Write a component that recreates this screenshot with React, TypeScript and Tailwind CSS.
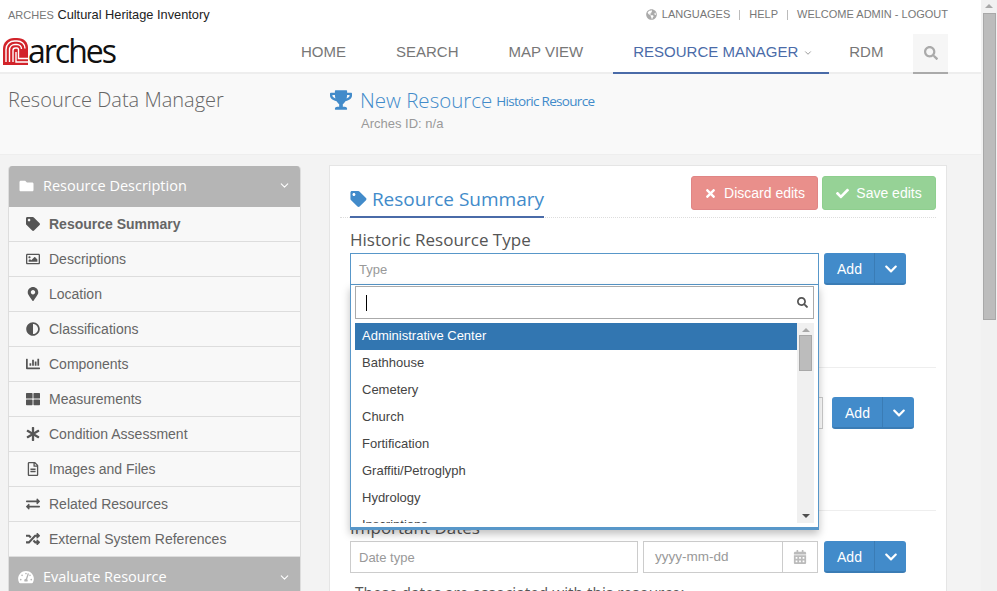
import { ChevronDown } from 'lucide-react'
import { FaAdjust, FaCalendarAlt, FaChartBar, FaCheck, FaChevronDown, FaExchangeAlt, FaFolder, FaGlobeAmericas, FaRegImage, FaMapMarkerAlt, FaAsterisk, FaRandom, FaRegFileAlt, FaSearch, FaTachometerAlt, FaTag, FaThLarge, FaTimes, FaTrophy } from 'react-icons/fa'

const sideItems = [
  { label: 'Resource Summary', icon: FaTag, active: true },
  { label: 'Descriptions', icon: FaRegImage },
  { label: 'Location', icon: FaMapMarkerAlt },
  { label: 'Classifications', icon: FaAdjust },
  { label: 'Components', icon: FaChartBar },
  { label: 'Measurements', icon: FaThLarge },
  { label: 'Condition Assessment', icon: FaAsterisk },
  { label: 'Images and Files', icon: FaRegFileAlt },
  { label: 'Related Resources', icon: FaExchangeAlt },
  { label: 'External System References', icon: FaRandom },
]

const options = ['Bathhouse', 'Cemetery', 'Church', 'Fortification', 'Graffiti/Petroglyph', 'Hydrology', 'Inscriptions']

const AddButton = () => (
  <div className="flex h-[32px] w-[82px] shrink-0 rounded-[3px] border-b-2 border-[#3a7cb5] bg-[#428bca] text-white">
    <div className="flex w-[51px] items-center justify-center border-r border-[#3a7cb5] pl-[1px] pt-[2px] text-[14px]">Add</div>
    <div className="flex flex-1 items-center justify-center pt-[1px]">
      <FaChevronDown className="h-[14px] w-[14px]" />
    </div>
  </div>
)

const Logo = () => (
  <div className="flex items-end">
    <svg width="26" height="27" viewBox="0 0 26 27" fill="none" className="shrink-0">
      <path d="M0 27V11C0 4 5 0 11 0H14C21 0 25 4 25 10V27Z" fill="#d2232a" />
      <path d="M3 24V11.5C3 6 7 3 11.5 3H14C18.5 3 22 6 22 10.5" stroke="#fff" strokeWidth="1.4" />
      <path d="M6.5 24V12C6.5 8.5 9 6.5 12 6.5H14C16.5 6.5 18.5 8.5 18.5 11" stroke="#fff" strokeWidth="1.4" />
      <path d="M10 24V12.5C10 11 11 10 12.5 10H14C15 10 15.5 10.5 15.5 12V20.5H26" stroke="#fff" strokeWidth="1.4" />
      <path d="M13 14V24H26" stroke="#fff" strokeWidth="1.4" />
    </svg>
    <span className="-ml-[1px] -mb-[1px] font-['Open_Sans',sans-serif] text-[32px] leading-[30px] tracking-[-2px] text-[#111]">arches</span>
  </div>
)

export default function App() {
  return (
    <div className="flex h-[591px] w-[997px] overflow-hidden bg-[#f3f3f3] font-['Liberation_Sans',sans-serif]">
      <div className="h-full w-[981px] shrink-0">
        <header className="h-[74px] border-b-2 border-[#eeeeee] bg-white">
          <div className="flex h-[28px] items-center justify-between pl-2 pr-[33px] pt-[1px]">
            <div className="text-[12.8px] text-[#222]">
              <span className="text-[11px] text-[#777]">ARCHES</span> Cultural Heritage Inventory
            </div>
            <div className="flex items-center text-[11px] text-[#777]">
              <FaGlobeAmericas className="mr-[5px] h-[11px] w-[11px] text-[#aaa]" />
              LANGUAGES
              <span className="mx-[9px] h-[10px] w-px bg-[#bbb]" />
              HELP
              <span className="mx-[9px] h-[10px] w-px bg-[#bbb]" />
              WELCOME ADMIN - LOGOUT
            </div>
          </div>
          <div className="flex h-[46px] items-start">
            <div className="ml-[3px] mt-[8px] w-[278px] shrink-0"><Logo /></div>
            <nav className="flex h-[46px] shrink-0 items-start whitespace-nowrap text-[15px] text-[#777]">
              <div className="flex h-[46px] items-center px-5 pt-[3px]">HOME</div>
              <div className="ml-[10px] flex h-[46px] items-center px-5 pt-[3px]">SEARCH</div>
              <div className="ml-[10px] flex h-[46px] items-center px-5 pt-[3px]">MAP VIEW</div>
              <div className="ml-[10px] flex h-[46px] w-[216px] items-center border-b-2 border-[#4a6ba8] pl-5 pt-[5px] text-[#4a6ba8]">
                RESOURCE MANAGER
                <ChevronDown className="ml-[5px] h-[10px] w-[10px] text-[#888]" />
              </div>
              <div className="flex h-[46px] items-center px-5 pt-[3px]">RDM</div>
              <div className="ml-[10px] mt-[6px] flex h-[40px] w-[35px] items-center justify-center border-b-2 border-[#aaaaaa] bg-[#f6f6f6]">
                <FaSearch className="h-[14px] w-[14px] text-[#aaa]" />
              </div>
            </nav>
          </div>
        </header>

        <div className="flex h-[81px] border-b border-[#eeeeee] bg-[#f9f9f9]">
          <div className="w-[330px] pl-2 pt-[10px] font-['Open_Sans',sans-serif] text-[20px] font-light leading-[32px] text-[#666]">Resource Data Manager</div>
          <div>
            <div className="flex h-[32px] items-center pt-[20px] text-[#428bca]">
              <FaTrophy className="mr-[8px] h-[20px] w-[22px]" />
              <span className="font-['Open_Sans',sans-serif] text-[20.5px] font-light">New Resource</span>
              <span className="ml-[4px] mt-[3px] font-['Open_Sans',sans-serif] text-[13.5px] tracking-[-0.7px]">Historic Resource</span>
            </div>
            <div className="ml-[31px] mt-[8px] text-[13px] text-[#999]">Arches ID: n/a</div>
          </div>
        </div>

        <div className="flex items-start pl-[8px] pt-[10px]">
          <aside className="mt-[1px] w-[293px] shrink-0 overflow-hidden rounded-t-[4px] border-x border-[#dddddd] bg-[#f8f8f8]">
            <div className="flex h-[41px] items-center justify-between bg-[#b5b5b5] pb-[2px] pl-[10px] pr-[9px] text-white">
              <div className="flex items-center font-['Open_Sans',sans-serif] text-[14.5px]">
                <FaFolder className="mr-[9px] h-[14px] w-[15px]" />
                Resource Description
              </div>
              <ChevronDown className="h-[13px] w-[13px]" />
            </div>
            {sideItems.map((item) => (
              <div key={item.label} className={`flex h-[35px] items-center border-b border-[#dddddd] text-[14px] text-[#666] ${item.active ? 'font-bold text-[#555]' : ''}`}>
                <div className="flex w-[40px] justify-center pl-[14px] pr-[6px]">
                  <item.icon className="h-[14px] w-[14px] text-[#555]" />
                </div>
                {item.label}
              </div>
            ))}
            <div className="flex h-[40px] items-center justify-between bg-[#b5b5b5] pl-[9px] pr-[9px] text-white">
              <div className="flex items-center font-['Open_Sans',sans-serif] text-[14.5px]">
                <FaTachometerAlt className="mr-[9px] h-[14px] w-[16px]" />
                Evaluate Resource
              </div>
              <ChevronDown className="h-[13px] w-[13px]" />
            </div>
          </aside>

          <main className="relative ml-[28px] h-[500px] w-[618px] shrink-0 border border-[#e5e5e5] bg-white pl-[20px] pr-[10px]">
            <div className="relative -ml-[10px] flex h-[52px] items-start justify-between border-b border-dotted border-[#dddddd] pl-[10px]">
              <div className="mt-[20px] flex h-[32px] w-[194px] items-center whitespace-nowrap border-b-2 border-[#4a6ba8] pb-[4px] font-['Open_Sans',sans-serif] text-[19px] text-[#428bca]">
                <FaTag className="mr-[5px] h-[16px] w-[17px]" />
                Resource Summary
              </div>
              <div className="mt-[10px] flex gap-[4px] text-[14px] text-white">
                <div className="flex h-[34px] w-[127px] items-center justify-center rounded-[3px] border border-[#e08585] bg-[#e98f8b]">
                  <FaTimes className="mr-[7px] h-[13px] w-[13px]" />Discard edits
                </div>
                <div className="flex h-[34px] w-[114px] items-center justify-center rounded-[3px] border border-[#8ecf8e] bg-[#96d296]">
                  <FaCheck className="mr-[7px] h-[13px] w-[13px]" />Save edits
                </div>
              </div>
            </div>

            <div className="h-[150px] border-b border-[#eeeeee] pt-[11px]">
              <div className="font-['Open_Sans',sans-serif] text-[17px] leading-[22px] text-[#555]">Historic Resource Type</div>
              <div className="mt-[2px] flex">
                <div className="flex h-[32px] w-[469px] items-center border border-[#5897c9] pl-2 pt-[1px] text-[13px] text-[#999]">Type</div>
                <div className="ml-[5px]"><AddButton /></div>
              </div>
            </div>

            <div className="h-[143px] border-b border-[#eeeeee]">
              <div className="flex pt-[29px]">
                <div className="h-[32px] w-[473px] border border-[#cccccc]" />
                <div className="ml-[9px]"><AddButton /></div>
              </div>
            </div>

            <div className="mt-[6px] font-['Open_Sans',sans-serif] text-[17px] leading-[22px] text-[#555]">Important Dates</div>
            <div className="mt-[2px] flex text-[13px] text-[#999]">
              <div className="flex h-[32px] w-[288px] items-center border border-[#cccccc] pl-2 pt-[1px]">Date type</div>
              <div className="ml-[5px] flex h-[32px] w-[175px] items-center border border-[#cccccc] pl-[11px]">
                <span className="flex-1 text-[13.5px]">yyyy-mm-dd</span>
                <div className="flex h-full w-[35px] items-center justify-center border-l border-[#cccccc]">
                  <FaCalendarAlt className="h-[14px] w-[14px] text-[#bbb]" />
                </div>
              </div>
              <div className="ml-[6px]"><AddButton /></div>
            </div>
            <div className="mt-[9px] pl-[5px] font-['Open_Sans',sans-serif] text-[15.4px] text-[#555]">These dates are associated with this resource:</div>

            <div className="absolute left-[20px] top-[119px] h-[245px] w-[469px] overflow-hidden border-x border-b-[3px] border-[#5897c9] bg-white px-[4px] pt-[1px] shadow-[0_4px_8px_rgba(0,0,0,0.25)]">
              <div className="flex h-[33px] w-[459px] items-center justify-between border border-[#aaaaaa] pl-[10px] pr-[5px]">
                <span className="h-[16px] w-px bg-black" />
                <FaSearch className="h-[11px] w-[11px] text-[#555]" />
              </div>
              <div className="mt-[4px] flex h-[200px] w-[459px]">
                <div className="flex-1 overflow-hidden text-[13px] text-[#444]">
                  <div className="flex h-[27px] items-center bg-[#3276b1] pb-[2px] pl-[7px] text-white">Administrative Center</div>
                  {options.map((option) => (
                    <div key={option} className="flex h-[27px] items-center pb-[2px] pl-[7px]">{option}</div>
                  ))}
                </div>
                <div className="flex w-[17px] flex-col items-center bg-[#f0f0f0] pt-[5px]">
                  <div className="h-0 w-0 border-x-[4px] border-b-[4px] border-x-transparent border-b-[#a8a8a8]" />
                  <div className="mt-[3px] h-[36px] w-[13px] border border-[#a8a8a8] bg-[#bcbcbc]" />
                  <div className="mt-auto mb-[5px] h-0 w-0 border-x-[4px] border-t-[4px] border-x-transparent border-t-[#505050]" />
                </div>
              </div>
            </div>
          </main>
        </div>
      </div>

      <div className="flex h-full w-4 flex-col items-center bg-[#f1f1f1]">
        <div className="mt-[4px] h-0 w-0 border-x-[4px] border-b-[4px] border-x-transparent border-b-[#a8a8a8]" />
        <div className="mt-[5px] h-[307px] w-[13px] border border-[#a8a8a8] bg-[#bcbcbc]" />
      </div>
    </div>
  )
}
